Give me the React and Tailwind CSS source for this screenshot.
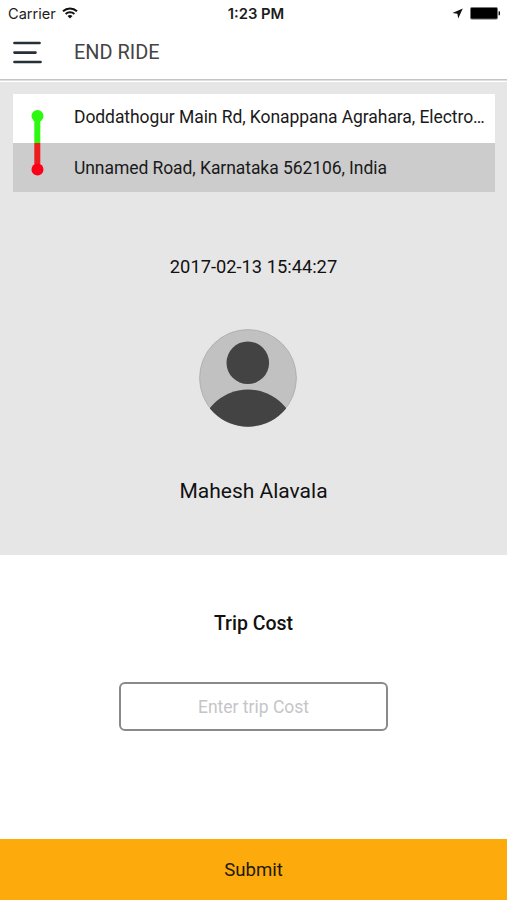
import React, { useState } from "react";

const trip = {
  pickup: "Doddathogur Main Rd, Konappana Agrahara, Electro…",
  drop: "Unnamed Road, Karnataka 562106, India",
  date: "2017-02-13 15:44:27",
  rider: "Mahesh Alavala",
};

const StatusBar = () => {
  return (
    <div className="grid grid-cols-3 items-center h-[27px] pl-2 pr-[7px] font-[Inter,sans-serif] text-[#1c1c1c]">
      <div className="flex items-center gap-[6px]">
        <span className="pt-[2px] text-[14.6px] leading-none">Carrier</span>
        <svg width="16" height="12" viewBox="0 0 16 12" fill="none" className="-mt-px">
          <path d="M1 4.2a10.2 10.2 0 0 1 14 0" stroke="#111" strokeWidth="2" />
          <path d="M3.6 7a6.4 6.4 0 0 1 8.8 0" stroke="#111" strokeWidth="1.9" />
          <path d="M8 11.6 5.5 9.1a3.6 3.6 0 0 1 5 0z" fill="#111" />
        </svg>
      </div>
      <span className="text-center pt-[2px] text-[14.8px] leading-none font-semibold pl-1">
        1:23 PM
      </span>
      <div className="flex items-center justify-end gap-[7px]">
        <svg width="11" height="11" viewBox="0 0 11 11">
          <path d="M10.8.4 6.2 10.6 5.4 5.8.4 5z" fill="#111" />
        </svg>
        <svg width="30" height="13" viewBox="0 0 30 13">
          <rect x="0.5" y="0.5" width="27" height="11.6" rx="1.3" fill="#000" stroke="#777" />
          <path d="M28.6 4.2a2.1 2.1 0 0 1 0 4.2z" fill="#111" />
        </svg>
      </div>
    </div>
  );
};

const Header = () => {
  return (
    <div className="flex items-center h-[52px] pl-[13px]">
      <button type="button" aria-label="Menu" className="w-[61px]">
        <svg width="30" height="24" viewBox="0 0 30 24" stroke="#263036" strokeWidth="2.7" strokeLinecap="round">
          <path d="M1.5 2h25M1.5 11.6h21M1.5 21h26" />
        </svg>
      </button>
      <h1 className="text-[19.9px] leading-none text-[#444]">END RIDE</h1>
    </div>
  );
};

const RouteCard = () => {
  return (
    <div className="relative ml-[13px] mr-3 text-[17.5px] tracking-[-0.07px] text-[#1a1a1a]">
      <div className="flex items-center h-[49px] bg-white pl-[61px] pb-[2px]">
        <p className="whitespace-nowrap">{trip.pickup}</p>
      </div>
      <div className="flex items-center h-[49px] bg-[#cccccc] pl-[61px] pt-[2px]">
        <p className="whitespace-nowrap">{trip.drop}</p>
      </div>
      {/* Pickup to drop marker, runs across both rows */}
      <svg className="absolute left-[18px] top-[15px]" width="13" height="68" viewBox="0 0 13 68">
        <path d="M3.3 7h6v27h-6z" fill="#2cf90f" />
        <path d="M3.3 34h6v27h-6z" fill="#ee1c1c" />
        <circle cx="6.5" cy="7" r="6" fill="#2cf90f" />
        <circle cx="6.5" cy="60.5" r="6" fill="#fb0016" />
      </svg>
    </div>
  );
};

const Avatar = () => {
  return (
    <svg width="98" height="98" viewBox="0 0 98 98">
      <defs>
        <clipPath id="avatar">
          <circle cx="49" cy="49" r="48.7" />
        </clipPath>
      </defs>
      <circle cx="49" cy="49" r="48.4" fill="#c1c1c1" stroke="#aaa" strokeWidth="0.8" />
      <circle cx="48.8" cy="33.8" r="21.3" fill="#434343" />
      <circle cx="49" cy="109" r="48.5" fill="#434343" clipPath="url(#avatar)" />
    </svg>
  );
};

const App = () => {
  const [cost, setCost] = useState("");

  return (
    <div className="flex flex-col w-full h-screen bg-white overflow-hidden font-[Roboto,sans-serif] text-[#111]">
      <StatusBar />
      <Header />
      <div className="h-[3px] shrink-0 bg-[#dedede] border-t border-t-[#c4c4c4] border-b border-b-white" />

      <div className="flex flex-col items-stretch h-[473px] shrink-0 bg-[#e6e6e6] pt-3">
        <RouteCard />
        <p className="mt-[62px] text-center text-[18.3px] leading-[26px]">{trip.date}</p>
        <div className="flex justify-center mt-[49px] pr-[11px]">
          <Avatar />
        </div>
        <p className="mt-[49px] text-center text-[21px] leading-[30px]">{trip.rider}</p>
      </div>

      <div className="flex flex-col items-center flex-1 pt-[55px]">
        <label htmlFor="cost" className="text-[19.5px] leading-[28px] font-medium">
          Trip Cost
        </label>
        <input
          id="cost"
          value={cost}
          onChange={(e) => setCost(e.target.value)}
          placeholder="Enter trip Cost"
          className="mt-[44px] w-[269px] h-[49px] rounded-[6px] border-2 border-[#8a8a8a] text-center text-[17.5px] placeholder:text-[#c5c5c8] outline-none"
        />
      </div>

      <button
        type="button"
        className="h-[61px] shrink-0 bg-[#fdab0c] pt-[3px] text-[18.6px] text-[#21190a]"
      >
        Submit
      </button>
    </div>
  );
};

export default App;
